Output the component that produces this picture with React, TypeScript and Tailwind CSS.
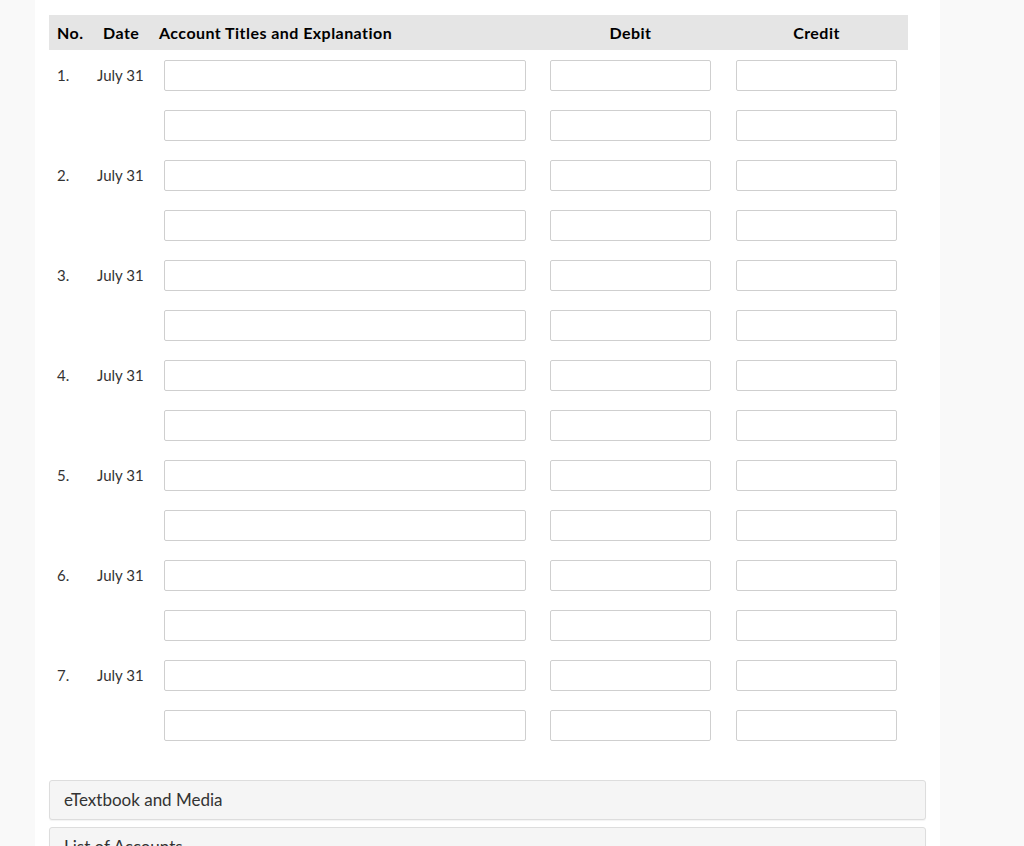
const entries = [1, 2, 3, 4, 5, 6, 7];

function Box({ wide }: { wide?: boolean }) {
  return (
    <input
      type="text"
      className={
        wide
          ? 'h-[31px] w-[362px] rounded-[2px] border border-[#cfcfcf] bg-white outline-none'
          : 'h-[31px] w-[161px] rounded-[2px] border border-[#cfcfcf] bg-white outline-none'
      }
    />
  );
}

export default function App() {
  return (
    <div className="h-[846px] overflow-hidden bg-[#f9f9f9] font-['Lato',sans-serif] text-[#333]">
      <div className="ml-[35px] w-[905px] bg-white pb-10 pl-[14px] pr-[15px] pt-[15px]">
        <div className="flex h-[35px] w-[859px] items-center bg-[#e5e5e5] text-[16px] font-bold tracking-[0.45px] text-black">
          <span className="ml-[8px] w-[46px]">No.</span>
          <span className="w-[56px]">Date</span>
          <span className="w-[391px]">Account Titles and Explanation</span>
          <span className="w-[161px] text-center">Debit</span>
          <span className="ml-[25px] w-[161px] text-center">Credit</span>
        </div>

        <div className="mt-[10px] flex flex-col gap-[19px]">
          {entries.map((n) => (
            <div key={n} className="flex flex-col gap-[19px]">
              <div className="flex items-center text-[15px]">
                <span className="ml-[8px] w-[40px]">{n}.</span>
                <span className="w-[67px]">July 31</span>
                <Box wide />
                <div className="ml-[24px]"><Box /></div>
                <div className="ml-[25px]"><Box /></div>
              </div>
              <div className="flex items-center">
                <div className="ml-[115px]"><Box wide /></div>
                <div className="ml-[24px]"><Box /></div>
                <div className="ml-[25px]"><Box /></div>
              </div>
            </div>
          ))}
        </div>

        <div className="mt-[39px] flex flex-col gap-[7px]">
          <div className="flex h-[40px] w-[877px] items-center rounded-[3px] border border-[#dddddd] bg-[#f5f5f5] px-[14px] text-[17px] text-[#333] shadow-[0_1px_1px_rgba(0,0,0,0.05)]">
            eTextbook and Media
          </div>
          <div className="flex h-[40px] w-[877px] items-center rounded-[3px] border border-[#dddddd] bg-[#f5f5f5] px-[14px] text-[17px] text-[#333] shadow-[0_1px_1px_rgba(0,0,0,0.05)]">
            List of Accounts
          </div>
        </div>
      </div>
    </div>
  );
}
